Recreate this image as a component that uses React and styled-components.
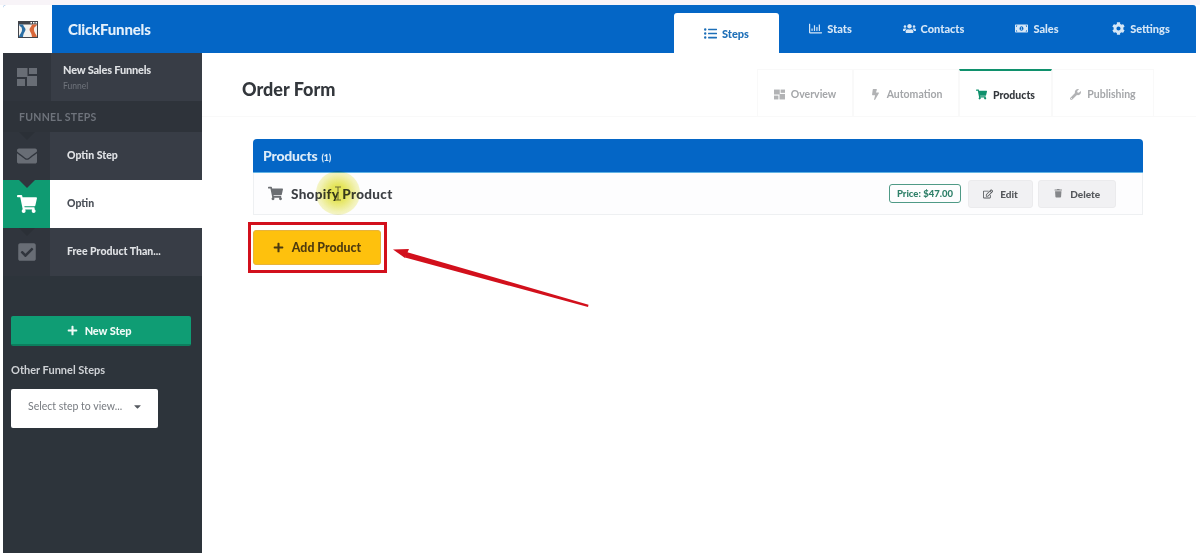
import React from "react";
import styled, { createGlobalStyle } from "styled-components";
import {
  FaEnvelope, FaShoppingCart, FaCheckSquare, FaPlus, FaListUl, FaRegChartBar,
  FaUsers, FaMoneyBillAlt, FaCog, FaBolt, FaWrench, FaRegEdit, FaTrash, FaCaretDown,
} from "react-icons/fa";

const Global = createGlobalStyle`
  html, body { margin: 0; padding: 0; background: #fff; }
  * { box-sizing: border-box; }
  body { font-family: Lato, "Open Sans", "Liberation Sans", sans-serif; }
`;

const Page = styled.div`
  position: relative;
  height: 553px;
  overflow: hidden;
  display: flex;
  flex-direction: column;
  padding: 5px 4px 0 3px;
  background: linear-gradient(#f8f4f8 0 5px, #fff 5px);
  filter: blur(0.35px);
`;

const Header = styled.header`
  flex: 0 0 48px;
  display: flex;
  align-items: stretch;
  padding-right: 3px;
  background: #0466c6;
  border-radius: 3px 3px 0 0;
  overflow: hidden;
`;

const LogoCell = styled.div`
  flex: 0 0 49px;
  display: flex;
  align-items: center;
  justify-content: center;
  background: #fff;
`;

const Brand = styled.div`
  flex: 1;
  padding-left: 16px;
  display: flex;
  align-items: center;
  color: #e4f0fb;
  font-size: 15px;
  font-weight: 900;
  letter-spacing: -0.2px;
`;

const NavTab = styled.div`
  flex: 0 0 ${(p) => p.$w}px;
  display: flex;
  align-items: center;
  justify-content: center;
  gap: 5px;
  font-size: 11px;
  font-weight: 900;
  color: ${(p) => (p.$active ? "#1d6fb8" : "#d5e6f6")};
  background: ${(p) => (p.$active ? "#fff" : "transparent")};
  border-radius: 3px 3px 0 0;
  margin-top: ${(p) => (p.$active ? "8px" : "0")};
  padding-bottom: ${(p) => (p.$active ? "0" : "2px")};
  svg { font-size: 13px; }
`;

const Body = styled.div`
  flex: 1;
  display: flex;
  min-height: 0;
`;

const Sidebar = styled.aside`
  flex: 0 0 199px;
  background: #2d343b;
  display: flex;
  flex-direction: column;
`;

const FunnelRow = styled.div`
  height: 48px;
  display: flex;
  background: #383d46;
`;

const IconCell = styled.div`
  position: relative;
  flex: 0 0 ${(p) => p.$w}px;
  display: flex;
  align-items: center;
  justify-content: center;
  font-size: 20px;
  color: ${(p) => (p.$active ? "#fff" : "#686d75")};
  background: ${(p) => (p.$active ? "#0f9b72" : "#30353d")};
  &::before {
    content: "";
    display: ${(p) => (p.$notch ? "block" : "none")};
    position: absolute;
    top: 0;
    left: 16px;
    border: 8px solid transparent;
    border-bottom: 0;
    border-top-color: ${(p) => (p.$active ? "#30353d" : "#2b3037")};
  }
`;

const FunnelText = styled.div`
  padding: 10px 0 0 12px;
  display: flex;
  flex-direction: column;
  gap: 5px;
`;

const FunnelName = styled.div`
  font-size: 11px;
  font-weight: 900;
  color: #dfe1e4;
  letter-spacing: -0.2px;
`;

const FunnelSub = styled.div`
  font-size: 8.5px;
  color: #6f747c;
`;

const SectionLabel = styled.div`
  height: 31px;
  padding: 1px 0 0 16px;
  display: flex;
  align-items: center;
  background: #2e333a;
  color: #6e737b;
  font-size: 10.5px;
  font-weight: 700;
  letter-spacing: 0.3px;
`;

const StepRow = styled.div`
  height: 48px;
  display: flex;
  background: ${(p) => (p.$active ? "#fff" : "#383d46")};
`;

const StepName = styled.div`
  padding: 0 0 3px 17px;
  display: flex;
  align-items: center;
  font-size: 10.5px;
  font-weight: 900;
  color: ${(p) => (p.$active ? "#4a4f57" : "#e0e2e5")};
`;

const NewStep = styled.button`
  margin: 40px 11px 0 8px;
  height: 30px;
  padding: 0 4px 0 0;
  display: flex;
  align-items: center;
  justify-content: center;
  gap: 7px;
  border: 0;
  border-bottom: 2px solid #0c7f5e;
  border-radius: 2px;
  background: #0f9d74;
  color: #f0faf6;
  font: 900 11px Lato, sans-serif;
  letter-spacing: -0.1px;
  svg { font-size: 11px; }
`;

const OtherLabel = styled.div`
  margin: 17px 0 0 8px;
  font-size: 11px;
  font-weight: 700;
  color: #cfd2d6;
`;

const SelectBox = styled.div`
  margin: 13px 0 0 8px;
  width: 147px;
  height: 39px;
  display: flex;
  align-items: center;
  padding: 0 15px 6px 17px;
  justify-content: space-between;
  background: #fff;
  border-radius: 2px;
  color: #777b80;
  font-size: 10.5px;
  svg { color: #555a60; font-size: 11px; margin-top: 2px; }
`;

const Main = styled.main`
  flex: 1;
  min-width: 0;
  background: #fff;
`;

const TopBar = styled.div`
  height: 64px;
  display: flex;
  align-items: flex-end;
  justify-content: space-between;
  padding: 0 42px 0 40px;
  border-bottom: 1px solid #f9f9f9;
`;

const Title = styled.h1`
  margin: 0 0 16px;
  font-size: 18px;
  font-weight: 900;
  color: #33373c;
`;

const SubTabs = styled.div`
  display: flex;
`;

const SubTab = styled.div`
  width: ${(p) => p.$w}px;
  height: 47px;
  padding-top: 2px;
  display: flex;
  align-items: center;
  justify-content: center;
  gap: 6px;
  font-size: 10.5px;
  font-weight: ${(p) => (p.$active ? 900 : 700)};
  color: ${(p) => (p.$active ? "#33373c" : "#a4a6a9")};
  border: 1px solid #f9f9f9;
  border-bottom: 0;
  border-top: ${(p) => (p.$active ? "2.5px solid #10916d" : "1px solid #f9f9f9")};
  svg { font-size: 11px; color: ${(p) => (p.$active ? "#10916d" : "#b2b3b5")}; }
`;

const Content = styled.div`
  padding: 22px 53px 0 51px;
`;

const Panel = styled.section`
  border: 1px solid #eef0f2;
  border-top: 0;
  border-radius: 4px 4px 0 0;
`;

const PanelHead = styled.div`
  height: 34px;
  display: flex;
  align-items: center;
  gap: 4px;
  padding-left: 10px;
  margin: 0 -1px;
  background: #0466c6;
  border-bottom: 1px solid #62b3e4;
  border-radius: 4px 4px 0 0;
  color: #dcebf8;
  font-size: 14px;
  font-weight: 900;
  letter-spacing: -0.2px;
`;

const Count = styled.span`
  font-size: 9px;
  margin-top: 3px;
`;

const ProductRow = styled.div`
  position: relative;
  height: 41px;
  display: flex;
  align-items: center;
  padding: 0 26px 0 14px;
  background: #fdfdfe;
`;

const ProductName = styled.div`
  display: flex;
  align-items: center;
  gap: 8px;
  flex: 1;
  font-size: 13.5px;
  font-weight: 900;
  letter-spacing: 0.3px;
  color: #3c3f44;
  svg { font-size: 15px; color: #6b6e72; }
`;

const Price = styled.div`
  height: 19px;
  padding: 0 7px;
  display: flex;
  align-items: center;
  border: 1px solid #4f9a86;
  border-radius: 3px;
  font-size: 9.5px;
  font-weight: 900;
  color: #2f8069;
  margin-right: 7px;
`;

const RowButton = styled.div`
  width: ${(p) => p.$w}px;
  height: 28px;
  margin-left: ${(p) => p.$ml || 0}px;
  display: flex;
  align-items: center;
  justify-content: center;
  gap: ${(p) => p.$gap || 7}px;
  background: #f1f1f3;
  border: 1px solid #ebebed;
  border-radius: 3px;
  font-size: 10px;
  font-weight: 900;
  color: #55585c;
  svg { font-size: 10px; }
`;

const GreyIcon = styled.span`
  display: inline-flex;
  color: #85878a;
  svg { font-size: 8.5px; }
`;

const Highlight = styled.div`
  position: absolute;
  left: 62px;
  top: -2px;
  width: 44px;
  height: 44px;
  border-radius: 50%;
  background: radial-gradient(circle, rgba(226,226,60,.85) 0 25%, rgba(232,232,110,.5) 60%, rgba(245,245,190,0) 100%);
  mix-blend-mode: multiply;
`;

const CursorMark = styled.svg`
  position: absolute;
  left: 80px;
  top: 13px;
`;

const Callout = styled.div`
  display: inline-flex;
  margin: 7px 0 0 -5px;
  padding: 5px 3px 5px 2px;
  border: 3px solid #d2101c;
`;

const AddButton = styled.button`
  width: 128px;
  height: 35px;
  display: flex;
  align-items: center;
  justify-content: center;
  gap: 8px;
  background: #fec10d;
  border: 1px solid #e8b43a;
  border-radius: 3px;
  color: #4f3b0f;
  font: 900 12.3px Lato, sans-serif;
  svg { font-size: 11px; color: #4c3a10; }
`;

const Arrow = styled.svg`
  position: absolute;
  left: 385px;
  top: 240px;
  pointer-events: none;
`;

const GridIcon = ({ size = 20, color = "currentColor" }) => (
  <svg width={size} height={size} viewBox="0 0 20 20" fill={color}>
    <rect x="0" y="1" width="10.5" height="9" />
    <rect x="12" y="1" width="8" height="6" />
    <rect x="0" y="12" width="8" height="7" />
    <rect x="10" y="9" width="10" height="10" />
  </svg>
);

const Logo = () => (
  <svg width="20" height="17" viewBox="0 0 20 17">
    <rect x="0" y="0" width="20" height="17" fill="#42444a" />
    <rect x="1" y="3.500" width="18" height="12.500" fill="#f5f2ee" />
    <rect x="12.500" y="1" width="1.500" height="1.500" fill="#fff" />
    <rect x="15" y="1" width="1.500" height="1.500" fill="#fff" />
    <rect x="17.500" y="1" width="1.500" height="1.500" fill="#fff" />
    <path d="M1 3.500h4c.5 2.500 2.500 3 2.500 5s-2 2.500-2.500 7.500H1c.5-3 3-4 3-7.500S1.500 6 1 3.500z" fill="#2c6ea3" />
    <path d="M19 3.500h-5c-.5 2.500-2.500 3-2.500 5s2 2.500 2.500 7.500h5c-.5-3-3-4-3-7.500S18.500 6 19 3.500z" fill="#d9683a" />
  </svg>
);

const Steps = [
  { name: "Optin Step", icon: <FaEnvelope /> },
  { name: "Optin", icon: <FaShoppingCart />, active: true },
  { name: "Free Product Than...", icon: <FaCheckSquare /> },
];

export default function App() {
  return (
    <Page>
      <Global />
      <Header>
        <LogoCell><Logo /></LogoCell>
        <Brand>ClickFunnels</Brand>
        <NavTab $w={105} $active><FaListUl />Steps</NavTab>
        <NavTab $w={103}><FaRegChartBar />Stats</NavTab>
        <NavTab $w={103}><FaUsers />Contacts</NavTab>
        <NavTab $w={104}><FaMoneyBillAlt />Sales</NavTab>
        <NavTab $w={104}><FaCog />Settings</NavTab>
      </Header>
      <Body>
        <Sidebar>
          <FunnelRow>
            <IconCell $w={48}><GridIcon /></IconCell>
            <FunnelText>
              <FunnelName>New Sales Funnels</FunnelName>
              <FunnelSub>Funnel</FunnelSub>
            </FunnelText>
          </FunnelRow>
          <SectionLabel>FUNNEL STEPS</SectionLabel>
          {Steps.map((s) => (
            <StepRow key={s.name} $active={s.active}>
              <IconCell $w={47} $active={s.active} $notch>{s.icon}</IconCell>
              <StepName $active={s.active}>{s.name}</StepName>
            </StepRow>
          ))}
          <NewStep><FaPlus />New Step</NewStep>
          <OtherLabel>Other Funnel Steps</OtherLabel>
          <SelectBox>Select step to view...<FaCaretDown /></SelectBox>
        </Sidebar>
        <Main>
          <TopBar>
            <Title>Order Form</Title>
            <SubTabs>
              <SubTab $w={96}><GridIcon size={11} />Overview</SubTab>
              <SubTab $w={106}><FaBolt />Automation</SubTab>
              <SubTab $w={93} $active><FaShoppingCart />Products</SubTab>
              <SubTab $w={102}><FaWrench />Publishing</SubTab>
            </SubTabs>
          </TopBar>
          <Content>
            <Panel>
              <PanelHead>Products <Count>(1)</Count></PanelHead>
              <ProductRow>
                <ProductName><FaShoppingCart />Shopify Product</ProductName>
                <Highlight />
                <CursorMark width="8" height="15" viewBox="0 0 8 15" fill="none" stroke="#6a6a30" strokeWidth="1">
                  <path d="M1 1h6M4 1v13M1 14h6" />
                </CursorMark>
                <Price>Price: $47.00</Price>
                <RowButton $w={65}><FaRegEdit />Edit</RowButton>
                <RowButton $w={78} $ml={5} $gap={8}><GreyIcon><FaTrash /></GreyIcon>Delete</RowButton>
              </ProductRow>
            </Panel>
            <Callout>
              <AddButton><FaPlus />Add Product</AddButton>
            </Callout>
          </Content>
        </Main>
      </Body>
      <Arrow width="210" height="72" viewBox="0 0 210 72">
        <path d="M203.500 64.800 L203 67 L20 17.500 L21.500 12 Z" fill="#d2101c" />
        <path d="M8 9.500 L24 9 L20 18 Z" fill="#d2101c" />
      </Arrow>
    </Page>
  );
}
